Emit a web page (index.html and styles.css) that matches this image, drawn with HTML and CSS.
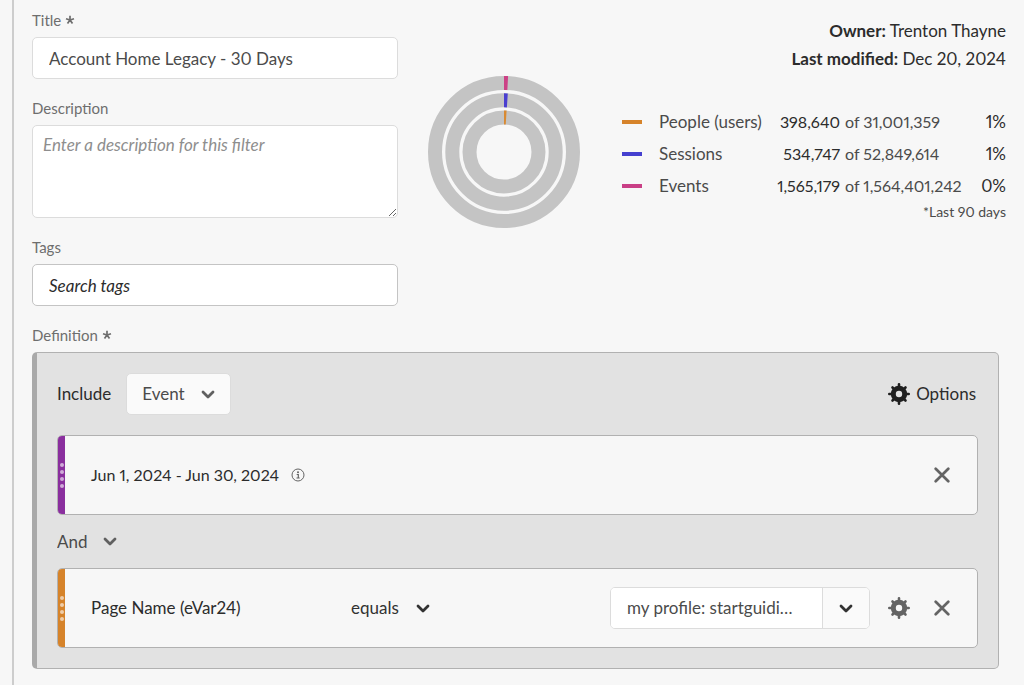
FILE: index.html
```html
<!DOCTYPE html>
<html lang="en">

<head>
    <meta charset="UTF-8">
    <meta name="viewport" content="width=device-width, initial-scale=1.0">
    <title>Filter builder</title>
    <link rel="stylesheet" href="styles.css">
</head>

<body>
    <!-- Shared icons -->
    <svg class="sprite" aria-hidden="true">
        <symbol id="chevron" viewBox="0 0 14 9">
            <path d="M2 2 L7 7 L12 2" fill="none" stroke="currentColor" stroke-width="2.8" stroke-linecap="round" stroke-linejoin="round" />
        </symbol>
        <symbol id="cross" viewBox="0 0 16 16">
            <path d="M1.7 1.7 L14.3 14.3 M14.3 1.7 L1.7 14.3" fill="none" stroke="currentColor" stroke-width="2.7" stroke-linecap="round" />
        </symbol>
        <symbol id="gear" viewBox="0 0 22 22">
            <circle cx="11" cy="11" r="5.7" fill="none" stroke="currentColor" stroke-width="5" />
            <path d="M11 1.3 V4 M11 18 V20.7 M1.3 11 H4 M18 11 H20.7 M4.5 4.5 L6 6 M16 16 L17.5 17.5 M17.5 4.5 L16 6 M6 16 L4.5 17.5" fill="none" stroke="currentColor" stroke-width="2.6" stroke-linecap="round" />
        </symbol>
    </svg>

    <main class="builder">
        <div class="top">
            <form class="details">
                <div class="field">
                    <label for="title">Title <svg class="star" viewBox="0 0 10 10" aria-hidden="true"><path d="M5 5 V.8 M5 5 L9 3.7 M5 5 L7.5 8.6 M5 5 L2.5 8.6 M5 5 L1 3.7" /></svg></label>
                    <input type="text" id="title" class="textbox" value="Account Home Legacy - 30 Days">
                </div>
                <div class="field">
                    <label for="description">Description</label>
                    <textarea id="description" class="textbox textbox-area" placeholder="Enter a description for this filter"></textarea>
                </div>
                <div class="field">
                    <label for="tags">Tags</label>
                    <input type="text" id="tags" class="textbox textbox-tags" placeholder="Search tags">
                </div>
            </form>

            <!-- Outer ring: events, middle: sessions, inner: people -->
            <svg class="rings" viewBox="0 0 152 152" role="img" aria-label="Share of people, sessions and events">
                <g class="ring-track">
                    <circle cx="76" cy="76" r="69" />
                    <circle cx="76" cy="76" r="51.7" />
                    <circle cx="76" cy="76" r="34.5" />
                </g>
                <g class="ring-value" transform="rotate(-90 76 76)">
                    <circle class="events" cx="76" cy="76" r="69" stroke-dasharray="3.8 500" />
                    <circle class="sessions" cx="76" cy="76" r="51.7" stroke-dasharray="3.4 400" />
                    <circle class="people" cx="76" cy="76" r="34.5" stroke-dasharray="2.2 300" />
                </g>
            </svg>

            <section class="summary">
                <p class="meta"><strong>Owner:</strong> Trenton Thayne</p>
                <p class="meta"><strong>Last modified:</strong> Dec 20, 2024</p>
                <table class="stats">
                    <tr>
                        <td class="key"><span class="swatch people"></span></td>
                        <th scope="row">People (users)</th>
                        <td class="count">398,640</td>
                        <td class="total">of 31,001,359</td>
                        <td class="percent">1%</td>
                    </tr>
                    <tr>
                        <td class="key"><span class="swatch sessions"></span></td>
                        <th scope="row">Sessions</th>
                        <td class="count">534,747</td>
                        <td class="total">of 52,849,614</td>
                        <td class="percent">1%</td>
                    </tr>
                    <tr>
                        <td class="key"><span class="swatch events"></span></td>
                        <th scope="row">Events</th>
                        <td class="count">1,565,179</td>
                        <td class="total">of 1,564,401,242</td>
                        <td class="percent">0%</td>
                    </tr>
                </table>
                <p class="note">*Last 90 days</p>
            </section>
        </div>

        <h2 class="heading">Definition <svg class="star" viewBox="0 0 10 10" aria-hidden="true"><path d="M5 5 V.8 M5 5 L9 3.7 M5 5 L7.5 8.6 M5 5 L2.5 8.6 M5 5 L1 3.7" /></svg></h2>
        <section class="definition">
            <div class="toolbar">
                <label for="scope">Include</label>
                <div class="picker picker-box">
                    <select id="scope">
                        <option>Event</option>
                        <option>Session</option>
                        <option>Person</option>
                    </select>
                    <svg class="chevron"><use href="#chevron" /></svg>
                </div>
                <button type="button" class="options"><svg class="gear"><use href="#gear" /></svg>Options</button>
            </div>

            <article class="rule">
                <div class="handle handle-date"><i></i><i></i><i></i><i></i></div>
                <div class="rule-body">
                    <span class="dates">Jun 1, 2024 - Jun 30, 2024</span>
                    <button type="button" class="icon-button info" aria-label="Info">
                        <svg viewBox="0 0 14 14">
                            <circle cx="7" cy="7" r="6" fill="none" stroke="currentColor" />
                            <circle cx="7" cy="4.3" r="1" fill="currentColor" />
                            <path d="M5.7 6.5 H7.3 V10 M5.5 10 H8.7" fill="none" stroke="currentColor" stroke-width="1.2" />
                        </svg>
                    </button>
                    <button type="button" class="icon-button remove" aria-label="Remove"><svg class="cross"><use href="#cross" /></svg></button>
                </div>
            </article>

            <div class="picker joiner">
                <select aria-label="Join rules with">
                    <option>And</option>
                    <option>Or</option>
                    <option>Then</option>
                </select>
                <svg class="chevron"><use href="#chevron" /></svg>
            </div>

            <article class="rule">
                <div class="handle handle-dimension"><i></i><i></i><i></i><i></i></div>
                <div class="rule-body">
                    <span class="dimension">Page Name (eVar24)</span>
                    <div class="picker operator">
                        <select aria-label="Operator">
                            <option>equals</option>
                            <option>contains</option>
                        </select>
                        <svg class="chevron"><use href="#chevron" /></svg>
                    </div>
                    <div class="combo">
                        <input type="text" aria-label="Value" value="my profile: startguidi…">
                        <button type="button" aria-label="Show values"><svg class="chevron"><use href="#chevron" /></svg></button>
                    </div>
                    <button type="button" class="icon-button" aria-label="Settings"><svg class="gear"><use href="#gear" /></svg></button>
                    <button type="button" class="icon-button remove" aria-label="Remove"><svg class="cross"><use href="#cross" /></svg></button>
                </div>
            </article>
        </section>
    </main>
</body>

</html>
```

FILE: styles.css
```css
* {
    box-sizing: border-box;
}

body {
    margin: 0;
    background: #f7f7f7;
    color: #2c2c2c;
    font-family: Lato, "Open Sans", sans-serif;
    font-size: 17px;
    font-variant-numeric: proportional-nums;
    line-height: 28px;
}

button,
input,
select,
textarea {
    font: inherit;
    color: inherit;
}

button {
    border: 0;
    padding: 0;
    background: none;
    cursor: pointer;
}

svg {
    display: block;
}

.sprite {
    display: none;
}

.builder {
    min-height: 100vh;
    margin-left: 12px;
    padding: 10px 18px 16px;
    border-left: 2px solid #cdcdcd;
}

/* Title, description, tags */
.top {
    display: flex;
    align-items: flex-start;
}

.details {
    width: 366px;
}

.field {
    margin-bottom: 19px;
}

.field label,
.heading {
    display: flex;
    align-items: center;
    gap: 4px;
    margin: 0 0 7px;
    color: #6e6e6e;
    font-size: 15px;
    font-weight: normal;
    line-height: 20px;
}

.star {
    width: 10px;
    height: 10px;
    fill: none;
    stroke: currentColor;
    stroke-width: 1.7;
}

.textbox {
    display: block;
    width: 100%;
    height: 42px;
    padding: 0 16px;
    border: 1px solid #dcdcdc;
    border-radius: 5px;
    background: #fff;
    color: #4b4b4b;
}

.textbox-area {
    height: 93px;
    padding: 5px 10px;
}

.textbox-area::placeholder {
    color: #8e8e8e;
    font-style: italic;
}

.textbox-tags {
    border-color: #c4c4c4;
}

.textbox-tags::placeholder {
    color: #2c2c2c;
    font-style: italic;
}

/* Rings and totals */
.rings {
    flex: none;
    width: 152px;
    height: 152px;
    margin: 66px 0 0 30px;
}

.ring-track,
.ring-value {
    fill: none;
    stroke-width: 14;
}

.ring-track {
    stroke: #c4c4c4;
}

.people {
    stroke: #d98a32;
    background: #d6832a;
}

.sessions {
    stroke: #4a3fd0;
    background: #4540cf;
}

.events {
    stroke: #cc4186;
    background: #c93f86;
}

.summary {
    width: 384px;
    margin: 7px 0 0 auto;
    text-align: right;
}

.meta {
    margin: 0;
}

.stats {
    width: 100%;
    margin-top: 33px;
    border-collapse: collapse;
    table-layout: fixed;
}

.stats td,
.stats th {
    height: 32px;
    padding: 0;
    font-weight: normal;
    white-space: nowrap;
}

.stats th {
    width: 110px;
    color: #4b4b4b;
    text-align: left;
}

.stats .key {
    width: 37px;
}

.swatch {
    display: block;
    width: 20px;
    height: 4px;
}

.stats .count {
    width: 71px;
    font-size: 16px;
}

.stats .total {
    width: 130px;
    padding-left: 5px;
    color: #4b4b4b;
    font-size: 16px;
    text-align: left;
}

.note {
    margin: 0;
    color: #4b4b4b;
    font-size: 14px;
    line-height: 20px;
}

/* Definition box */
.definition {
    margin-right: 7px;
    padding: 20px;
    border: 1px solid #b1b1b1;
    border-left: 5px solid #a9a9a9;
    border-radius: 5px;
    background: #e2e2e2;
}

.toolbar {
    display: flex;
    align-items: center;
    margin-bottom: 20px;
}

.picker {
    display: inline-grid;
    align-items: center;
    color: #4b4b4b;
}

.picker select,
.picker .chevron {
    grid-area: 1 / 1;
}

.picker select {
    appearance: none;
    width: 100%;
    height: 100%;
    padding: 0;
    border: 0;
    background: none;
}

.picker .chevron {
    justify-self: end;
    color: #606060;
    pointer-events: none;
}

.chevron {
    width: 14px;
    height: 9px;
}

.cross {
    width: 16px;
    height: 16px;
}

.gear {
    width: 22px;
    height: 22px;
}

.picker-box {
    width: 105px;
    height: 42px;
    margin-left: 15px;
    padding: 0 15px;
    border: 1px solid #dcdcdc;
    border-radius: 5px;
    background: #fafafa;
}

.options {
    display: flex;
    align-items: center;
    gap: 6px;
    margin-left: auto;
    padding-right: 2px;
}

.options .gear {
    color: #1f1f1f;
}

.joiner {
    width: 60px;
    height: 53px;
    vertical-align: top;
}

/* One rule card */
.rule {
    display: flex;
    height: 80px;
    border: 1px solid #b1b1b1;
    border-radius: 5px;
    background: #f7f7f7;
    overflow: hidden;
}

.handle {
    display: flex;
    flex-direction: column;
    align-items: center;
    justify-content: center;
    gap: 3px;
    width: 7px;
}

.handle i {
    width: 4px;
    height: 4px;
    border-radius: 50%;
    background: rgba(255, 255, 255, 0.6);
}

.handle-date {
    background: #8a2f9e;
}

.handle-dimension {
    background: #d6832a;
}

.rule-body {
    display: flex;
    flex: 1;
    align-items: center;
    padding: 0 27px 0 26px;
}

.icon-button {
    color: #646464;
}

.dates {
    font-size: 16px;
}

.info {
    width: 14px;
    margin-left: 12px;
}

.remove {
    margin-left: auto;
}

.dimension {
    width: 260px;
}

.operator {
    width: 79px;
    height: 42px;
    color: #323232;
}

.operator .chevron {
    color: #323232;
}

.combo {
    display: flex;
    width: 260px;
    height: 42px;
    margin: 0 18px 0 auto;
    border: 1px solid #dcdcdc;
    border-radius: 5px;
    overflow: hidden;
    color: #4b4b4b;
}

.combo input {
    flex: 1;
    min-width: 0;
    padding: 0 16px;
    border: 0;
    background: #fff;
}

.combo button {
    display: grid;
    place-items: center;
    width: 47px;
    border-left: 1px solid #dcdcdc;
    background: #fafafa;
    color: #323232;
}

.combo ~ .remove {
    margin-left: 24px;
}
```
